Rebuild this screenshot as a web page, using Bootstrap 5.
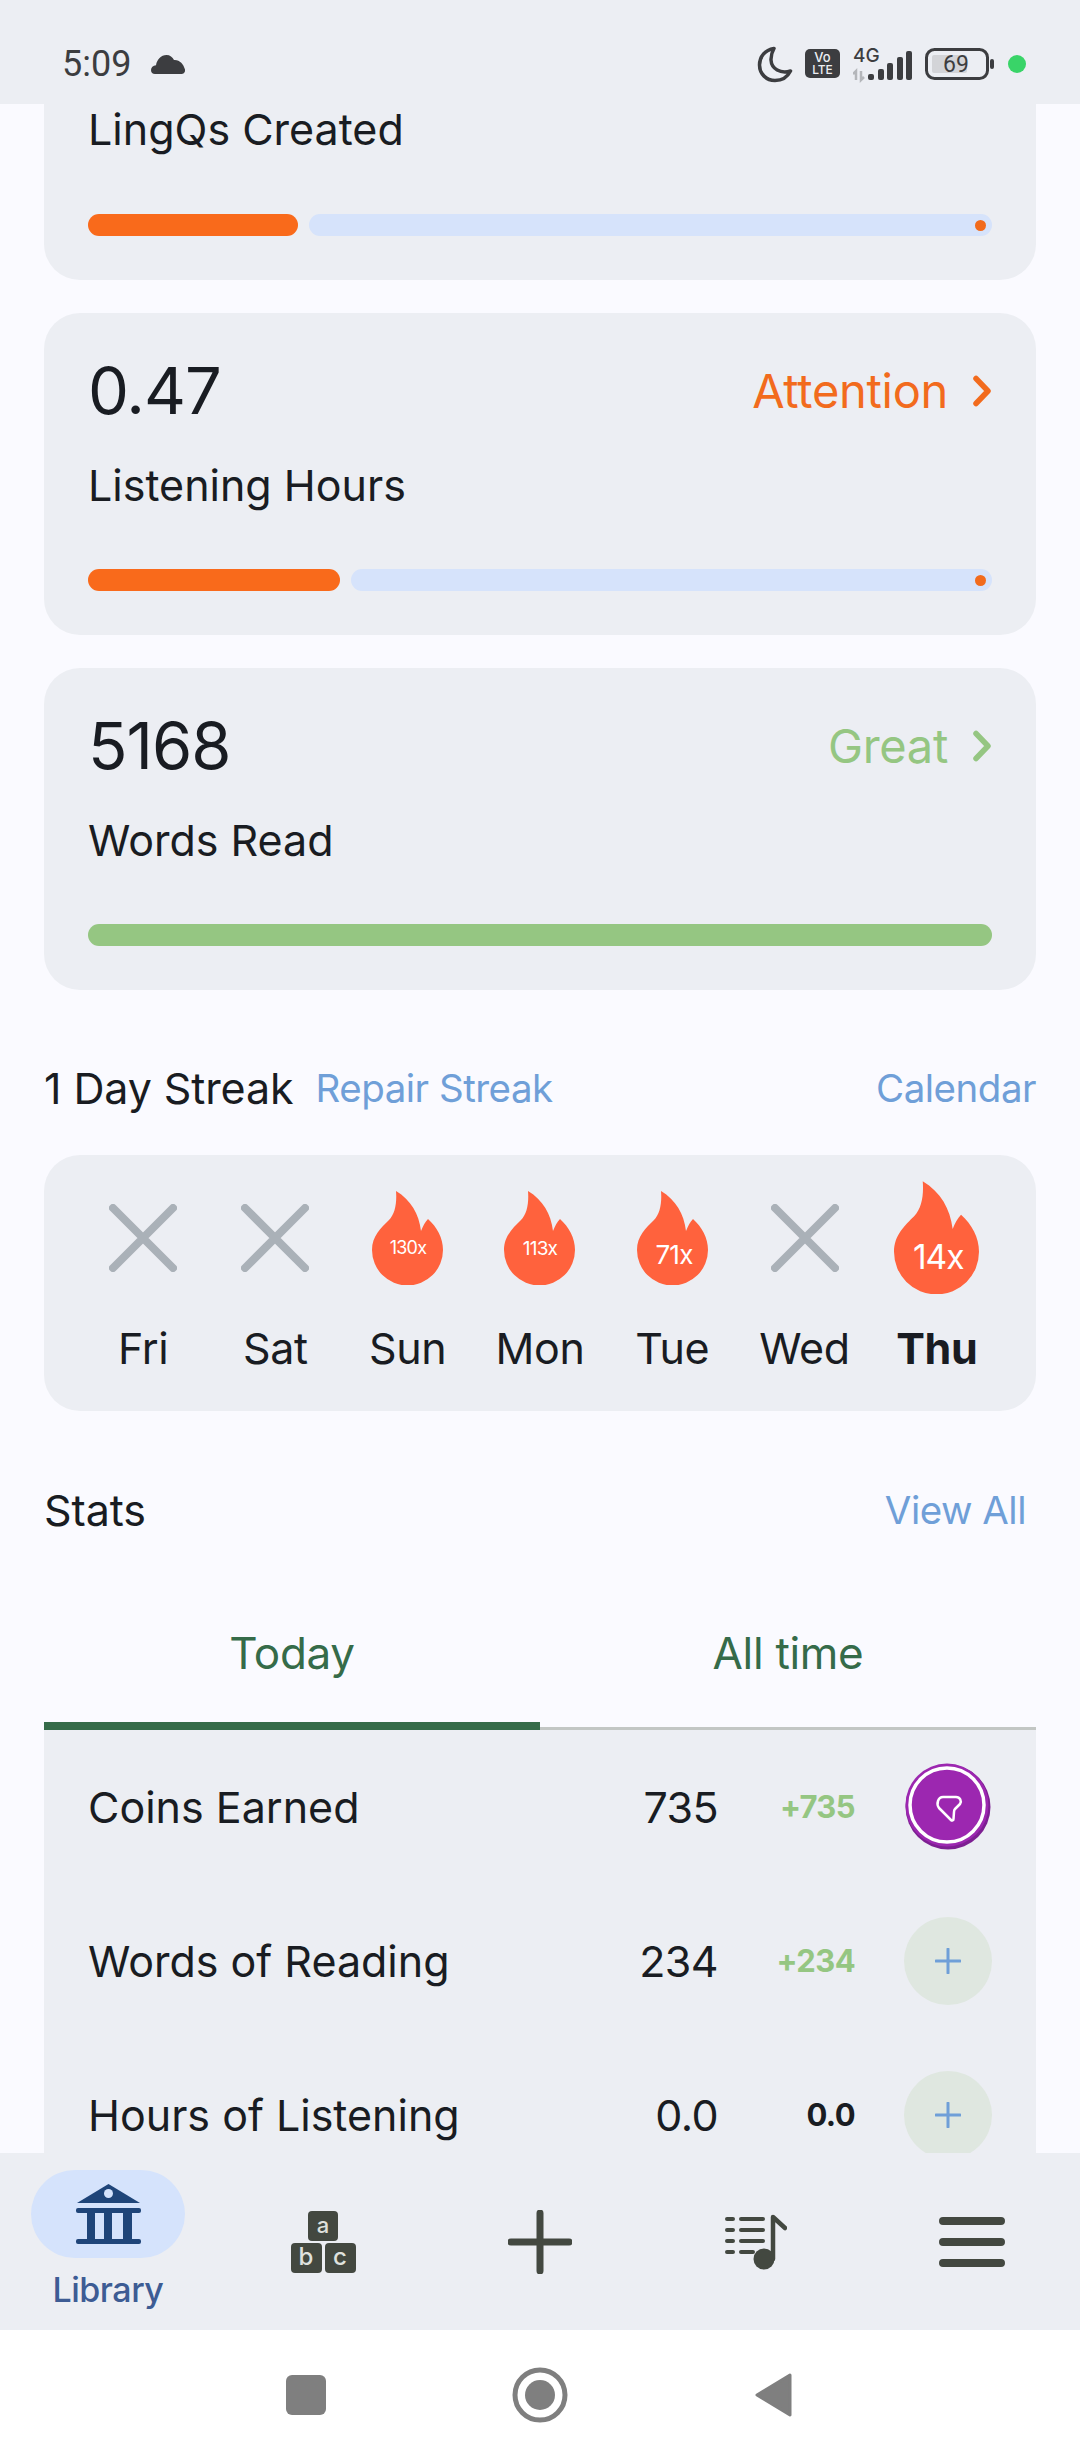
<!DOCTYPE html>
<html lang="en">
<head>
  <meta charset="UTF-8">
  <title>Library stats</title>
  <link href="https://cdn.jsdelivr.net/npm/bootstrap@5.3.0/dist/css/bootstrap.min.css" rel="stylesheet">
  <style>
    html, body { width: 1080px; height: 2460px; overflow: hidden; }
    body { background: #fff; font-family: "Inter", "Liberation Sans", sans-serif; color: #191c22; }
    .status-bar { height: 104px; background: #eceef3; padding: 24px 54px 0 62px; color: #3c3d40; }
    .clock { font-family: "Roboto", sans-serif; font-size: 36px; line-height: 1; }
    .cloud-gap { margin-left: 20px; }
    .scroll-area { height: 2049px; background: #fafaff; padding: 0 44px; overflow: hidden; }
    .goal-card { background: #eceef3; border: 0; border-radius: 36px; height: 322px; margin-bottom: 33px; padding: 43px 44px 0; }
    .goal-card.first { height: 176px; padding-top: 0; border-top-left-radius: 0; border-top-right-radius: 0; }
    .goal-num { font-size: 65px; line-height: 68px; letter-spacing: -1px; }
    .goal-label { font-size: 43px; line-height: 50px; margin-top: 33px; }
    .first .goal-label { margin-top: 0; }
    .goal-state { font-size: 47px; letter-spacing: -.3px; }
    .state-warn { color: #f26b1d; }
    .state-good { color: #95c682; }
    .bars { height: 22px; gap: 11px; position: absolute; left: 44px; right: 44px; bottom: 44px; }
    .bar-done { background: #f96a1b; border-radius: 11px; height: 22px; }
    .bar-left { background: #d6e3fb; border-radius: 11px; height: 22px; padding-right: 6px; }
    .bar-dot { width: 11px; height: 11px; border-radius: 50%; background: #f26b1d; }
    .bar-full { background: #95c682; border-radius: 11px; height: 22px; width: 100%; }
    .sec-head { height: 50px; padding-bottom: 2px; font-size: 43px; letter-spacing: -.1px; line-height: 48px; }
    .streak-head { margin-top: 74px; }
    .stats-head { margin-top: 75px; }
    .sec-link { color: #6f9fd8; font-size: 38.500px; letter-spacing: -.5px; }
    .repair-link { margin-left: 22px; }
    .view-link { margin-right: 10px; }
    .streak-box { background: #eceef3; border-radius: 36px; height: 256px; margin-top: 41px; padding: 26px 33px 0; }
    .day-icon { height: 113px; }
    .day-name { font-size: 43px; line-height: 50px; margin-top: 29px; letter-spacing: -.3px; }
    .flame-text { font-family: "Inter", sans-serif; fill: #fff; }
    .tabs-row { height: 126px; margin-top: 68px; border-bottom: 3px solid #c2c6c4; }
    .tab-item { color: #356b49; font-size: 44px; line-height: 98px; letter-spacing: -.3px; height: 126px; }
    .tab-active { border-bottom: 8px solid #356b49; }
    .stats-box { background: #eceef3; }
    .stat-row { height: 154px; padding: 0 44px; }
    .stat-name { font-size: 43px; }
    .stat-val { font-size: 43px; width: 120px; letter-spacing: -.6px; }
    .stat-diff { font-size: 31px; font-weight: 700; width: 137px; letter-spacing: -.6px; color: #95c682; }
    .stat-diff.zero { color: #191c22; }
    .stat-action { width: 88px; height: 88px; margin-left: 49px; flex: none; }
    .plus-btn { background: #dfe7e0; border-radius: 50%; }
    .bottom-bar { height: 177px; background: #eceef3; }
    .lib-pill { width: 154px; height: 88px; background: #d5e3fc; border-radius: 44px; margin-top: 17px; }
    .lib-text { color: #3d5c94; font-size: 34px; line-height: 40px; font-weight: 500; margin-top: 12px; letter-spacing: -.5px; }
    .sys-bar { height: 130px; background: #fff; }
    .sys-row { width: 702px; }
    .icon-text { font-family: "Inter", sans-serif; font-weight: 500; }
    .dot-gap { margin-left: 13px; }
  </style>
</head>
<body>
  <!-- status bar -->
  <div class="status-bar d-flex align-items-center justify-content-between">
    <div class="d-flex align-items-center">
      <span class="clock">5:09</span>
      <svg width="34" height="19" viewBox="0 0 34 19" class="cloud-gap"><path d="M4 19C1.500 19 0 17.500 0 15c0-2.500 2-4.500 5-4.800C6 4.500 10 0 15.500 0c3.500 0 6 2 7.500 5 5.500-.5 9.500 4 11 9.500.5 2.500-1 4.500-3.500 4.500z" fill="#3c3d40"/></svg>
    </div>
    <div class="d-flex align-items-center">
      <svg width="36" height="37" viewBox="0 0 36 37" class="me-2"><path d="M17 2.500C8 4 2.500 10.500 2.500 19c0 9 7 15.500 15.500 15.500 7 0 12.500-3.500 15.500-9.500-10 3-19-2-19.500-11C13.800 9.500 15 6 17 2.500z" fill="none" stroke="#3c3d40" stroke-width="3.500" stroke-linejoin="round"/></svg>
      <svg width="36" height="30" viewBox="0 0 36 30" class="me-2 ms-1"><rect width="35" height="29" rx="5" fill="#3c3d40"/><text x="17.500" y="13" text-anchor="middle" class="icon-text" font-size="13" font-weight="700" fill="#eceef3">Vo</text><text x="17.500" y="25" text-anchor="middle" class="icon-text" font-size="12" font-weight="700" fill="#eceef3">LTE</text></svg>
      <svg width="64" height="44" viewBox="0 -4 64 44" class="ms-1 me-2">
        <text x="0" y="16" class="icon-text" font-size="19" font-weight="700" fill="#3c3d40">4G</text>
        <path d="M3 34v-9l-3 3M8 25v9l3-3" fill="none" stroke="#b4b6ba" stroke-width="2.500"/>
        <rect x="15" y="28" width="6" height="6" rx="2" fill="#3c3d40"/>
        <rect x="25" y="23" width="6" height="11" rx="2" fill="#3c3d40"/>
        <rect x="34" y="17" width="6" height="17" rx="2" fill="#3c3d40"/>
        <rect x="44" y="11" width="6" height="23" rx="2" fill="#3c3d40"/>
        <rect x="53" y="5" width="6" height="29" rx="2" fill="#3c3d40"/>
      </svg>
      <svg width="70" height="32" viewBox="0 0 70 32">
        <rect x="1.500" y="1.500" width="61" height="29" rx="8" fill="none" stroke="#3c3d40" stroke-width="3"/>
        <rect x="7" y="7" width="35" height="18" rx="2" fill="#d3d4d8"/>
        <text x="31" y="24" text-anchor="middle" font-family="Roboto, sans-serif" font-size="23" fill="#3c3d40">69</text>
        <rect x="65" y="11" width="4" height="10" rx="2" fill="#3c3d40"/>
      </svg>
      <svg width="18" height="18" viewBox="0 0 18 18" class="dot-gap"><circle cx="9" cy="9" r="9" fill="#39d468"/></svg>
    </div>
  </div>

  <div class="scroll-area">
    <!-- goal cards -->
    <div class="card goal-card first">
      <div class="goal-label">LingQs Created</div>
      <div class="bars d-flex">
        <div class="bar-done flex-none" style="width: 210px"></div>
        <div class="bar-left flex-grow-1 d-flex align-items-center justify-content-end"><span class="bar-dot"></span></div>
      </div>
    </div>

    <div class="card goal-card">
      <div class="d-flex justify-content-between align-items-center">
        <span class="goal-num">0.47</span>
        <span class="goal-state state-warn d-flex align-items-center gap-4">Attention
          <svg width="20" height="32" viewBox="0 0 20 32"><path d="M4 3.500l12 12.500L4 28.500" fill="none" stroke="#f26b1d" stroke-width="5.500" stroke-linecap="round" stroke-linejoin="round"/></svg>
        </span>
      </div>
      <div class="goal-label">Listening Hours</div>
      <div class="bars d-flex">
        <div class="bar-done" style="width: 252px"></div>
        <div class="bar-left flex-grow-1 d-flex align-items-center justify-content-end"><span class="bar-dot"></span></div>
      </div>
    </div>

    <div class="card goal-card mb-0">
      <div class="d-flex justify-content-between align-items-center">
        <span class="goal-num">5168</span>
        <span class="goal-state state-good d-flex align-items-center gap-4">Great
          <svg width="20" height="32" viewBox="0 0 20 32"><path d="M4 3.500l12 12.500L4 28.500" fill="none" stroke="#95c682" stroke-width="5.500" stroke-linecap="round" stroke-linejoin="round"/></svg>
        </span>
      </div>
      <div class="goal-label">Words Read</div>
      <div class="bars d-flex"><div class="bar-full"></div></div>
    </div>

    <!-- streak -->
    <div class="sec-head streak-head d-flex align-items-center">
      <span>1 Day Streak</span>
      <span class="sec-link repair-link">Repair Streak</span>
      <span class="sec-link ms-auto">Calendar</span>
    </div>
    <div class="streak-box row g-0 text-center">
      <div class="col">
        <div class="day-icon d-flex align-items-center justify-content-center"><svg width="68" height="68" viewBox="0 0 68 68"><path d="M4 4l60 60M64 4L4 64" stroke="#aab1b8" stroke-width="8" stroke-linecap="round"/></svg></div>
        <div class="day-name">Fri</div>
      </div>
      <div class="col">
        <div class="day-icon d-flex align-items-center justify-content-center"><svg width="68" height="68" viewBox="0 0 68 68"><path d="M4 4l60 60M64 4L4 64" stroke="#aab1b8" stroke-width="8" stroke-linecap="round"/></svg></div>
        <div class="day-name">Sat</div>
      </div>
      <div class="col">
        <div class="day-icon d-flex align-items-center justify-content-center"><svg width="71" height="94" viewBox="0 0 71 94"><path d="M24 0C39 9 47 23 49 40 51 35 53 31 56 28 65 36 71 47 71 59A35.500 35.500 0 0 1 0 59C0 45 9 37 17 29 23 23 25 12 24 0Z" fill="#ff623d"/><text x="36" y="63" text-anchor="middle" font-size="18" letter-spacing="-.8" class="flame-text">130x</text></svg></div>
        <div class="day-name">Sun</div>
      </div>
      <div class="col">
        <div class="day-icon d-flex align-items-center justify-content-center"><svg width="71" height="94" viewBox="0 0 71 94"><path d="M24 0C39 9 47 23 49 40 51 35 53 31 56 28 65 36 71 47 71 59A35.500 35.500 0 0 1 0 59C0 45 9 37 17 29 23 23 25 12 24 0Z" fill="#ff623d"/><text x="36" y="64" text-anchor="middle" font-size="19" letter-spacing="-.8" class="flame-text">113x</text></svg></div>
        <div class="day-name">Mon</div>
      </div>
      <div class="col">
        <div class="day-icon d-flex align-items-center justify-content-center"><svg width="71" height="94" viewBox="0 0 71 94"><path d="M24 0C39 9 47 23 49 40 51 35 53 31 56 28 65 36 71 47 71 59A35.500 35.500 0 0 1 0 59C0 45 9 37 17 29 23 23 25 12 24 0Z" fill="#ff623d"/><text x="37" y="73" text-anchor="middle" font-size="26" letter-spacing="-.8" class="flame-text">71x</text></svg></div>
        <div class="day-name">Tue</div>
      </div>
      <div class="col">
        <div class="day-icon d-flex align-items-center justify-content-center"><svg width="68" height="68" viewBox="0 0 68 68"><path d="M4 4l60 60M64 4L4 64" stroke="#aab1b8" stroke-width="8" stroke-linecap="round"/></svg></div>
        <div class="day-name">Wed</div>
      </div>
      <div class="col">
        <div class="day-icon d-flex align-items-center justify-content-center"><svg width="85" height="113" viewBox="0 0 71 94"><path d="M24 0C39 9 47 23 49 40 51 35 53 31 56 28 65 36 71 47 71 59A35.500 35.500 0 0 1 0 59C0 45 9 37 17 29 23 23 25 12 24 0Z" fill="#ff623d"/><text x="37" y="73" text-anchor="middle" font-size="28" letter-spacing="-.8" class="flame-text">14x</text></svg></div>
        <div class="day-name fw-bold">Thu</div>
      </div>
    </div>

    <!-- stats -->
    <div class="sec-head stats-head d-flex align-items-center justify-content-between">
      <span>Stats</span>
      <span class="sec-link view-link">View All</span>
    </div>
    <div class="tabs-row row g-0 text-center">
      <div class="col-6 tab-item tab-active">Today</div>
      <div class="col-6 tab-item">All time</div>
    </div>
    <div class="stats-box">
      <div class="stat-row d-flex align-items-center">
        <span class="stat-name flex-grow-1">Coins Earned</span>
        <span class="stat-val text-end">735</span>
        <span class="stat-diff text-end">+735</span>
        <svg class="stat-action" viewBox="0 0 88 88">
          <circle cx="44" cy="44" r="42.500" fill="#7d1f92"/>
          <circle cx="43" cy="42" r="41.500" fill="#9c27b0"/>
          <circle cx="43" cy="42" r="37" fill="none" stroke="#fff" stroke-width="3.500"/>
          <path d="M39 34h13c4 0 6 4 4 7l-5 5c-1 1-1 2-1 3l-.5 7c0 1.500-1.500 2-2.500 1L35 45c-3-4-1-11 4-11z" fill="none" stroke="#fff" stroke-width="2.500" stroke-linejoin="round"/>
        </svg>
      </div>
      <div class="stat-row d-flex align-items-center">
        <span class="stat-name flex-grow-1">Words of Reading</span>
        <span class="stat-val text-end">234</span>
        <span class="stat-diff text-end">+234</span>
        <div class="stat-action plus-btn d-flex align-items-center justify-content-center">
          <svg width="26" height="26" viewBox="0 0 26 26"><path d="M13 1v24M1 13h24" stroke="#6f9fd8" stroke-width="3" stroke-linecap="round"/></svg>
        </div>
      </div>
      <div class="stat-row d-flex align-items-center">
        <span class="stat-name flex-grow-1">Hours of Listening</span>
        <span class="stat-val text-end">0.0</span>
        <span class="stat-diff zero text-end">0.0</span>
        <div class="stat-action plus-btn d-flex align-items-center justify-content-center">
          <svg width="26" height="26" viewBox="0 0 26 26"><path d="M13 1v24M1 13h24" stroke="#6f9fd8" stroke-width="3" stroke-linecap="round"/></svg>
        </div>
      </div>
    </div>
  </div>

  <!-- bottom navigation -->
  <div class="bottom-bar row g-0 text-center">
    <div class="col d-flex flex-column align-items-center">
      <div class="lib-pill d-flex align-items-center justify-content-center">
        <svg width="65" height="60" viewBox="0 0 65 60">
          <path d="M32.500 0L64 19H1z" fill="#1f4579"/><circle cx="32.500" cy="9.500" r="4.500" fill="#d5e3fc"/>
          <rect y="24" width="65" height="5" rx="2" fill="#1f4579"/>
          <rect x="11" y="29" width="8" height="26" fill="#1f4579"/><rect x="28" y="29" width="8" height="26" fill="#1f4579"/>
          <rect x="47" y="29" width="9" height="26" fill="#1f4579"/>
          <rect y="55" width="65" height="5" rx="2" fill="#1f4579"/>
        </svg>
      </div>
      <div class="lib-text">Library</div>
    </div>
    <div class="col d-flex align-items-center justify-content-center">
      <svg width="66" height="62" viewBox="0 0 66 62">
        <rect x="17" y="0" width="30" height="30" rx="4" fill="#434840"/>
        <rect x="0" y="32" width="31" height="30" rx="4" fill="#434840"/>
        <rect x="34" y="32" width="31" height="30" rx="4" fill="#434840"/>
        <text x="32" y="22" text-anchor="middle" font-size="22" fill="#dfe1dd" class="icon-text">a</text>
        <text x="15" y="54" text-anchor="middle" font-size="24" fill="#dfe1dd" class="icon-text">b</text>
        <text x="49" y="54" text-anchor="middle" font-size="24" fill="#dfe1dd" class="icon-text">c</text>
      </svg>
    </div>
    <div class="col d-flex align-items-center justify-content-center">
      <svg width="64" height="64" viewBox="0 0 64 64"><path d="M32 3v58M3 32h58" stroke="#434840" stroke-width="7" stroke-linecap="round"/></svg>
    </div>
    <div class="col d-flex align-items-center justify-content-center">
      <svg width="62" height="56" viewBox="0 0 62 56">
        <path d="M2 5h6M16 5h22M2 16h6M16 16h22M2 27h6M16 27h22M2 38h6M16 38h12" stroke="#434840" stroke-width="4" stroke-linecap="round"/>
        <circle cx="39" cy="45" r="10.500" fill="#434840"/>
        <path d="M48 45V3l12 11" fill="none" stroke="#434840" stroke-width="4.500" stroke-linecap="round" stroke-linejoin="round"/>
      </svg>
    </div>
    <div class="col d-flex align-items-center justify-content-center">
      <svg width="66" height="50" viewBox="0 0 66 50"><path d="M4 4h58M4 25h58M4 46h58" stroke="#434840" stroke-width="8" stroke-linecap="round"/></svg>
    </div>
  </div>

  <!-- android nav -->
  <div class="sys-bar d-flex align-items-center justify-content-center">
    <div class="sys-row row g-0 text-center align-items-center">
      <div class="col d-flex justify-content-center"><svg width="40" height="40" viewBox="0 0 40 40"><rect width="40" height="40" rx="6" fill="#7f7f7f"/></svg></div>
      <div class="col d-flex justify-content-center"><svg width="56" height="56" viewBox="0 0 56 56"><circle cx="28" cy="28" r="25" fill="none" stroke="#7f7f7f" stroke-width="5"/><circle cx="28" cy="28" r="15" fill="#7f7f7f"/></svg></div>
      <div class="col d-flex justify-content-center"><svg width="40" height="46" viewBox="0 0 40 46"><path d="M36 3L3 23l33 20z" fill="#7f7f7f" stroke="#7f7f7f" stroke-width="3" stroke-linejoin="round"/></svg></div>
    </div>
  </div>

  <script src="https://cdn.jsdelivr.net/npm/bootstrap@5.3.0/dist/js/bootstrap.bundle.min.js"></script>
</body>
</html>
